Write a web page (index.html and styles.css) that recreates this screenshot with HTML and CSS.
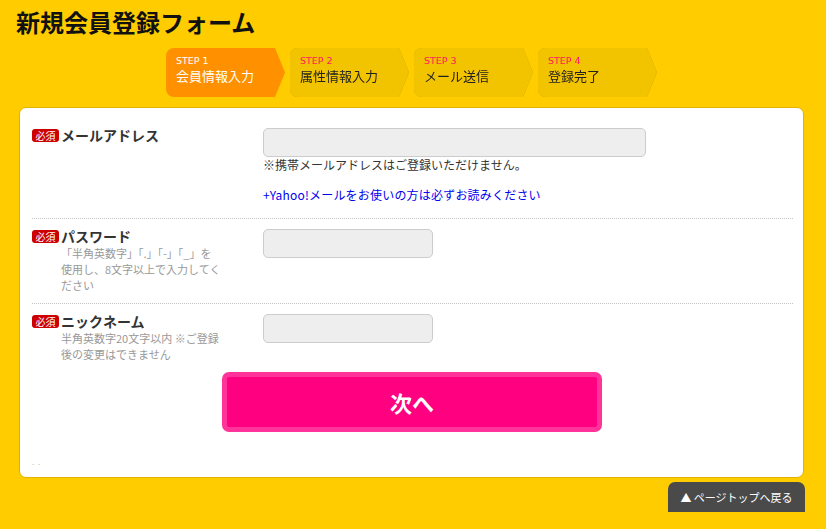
FILE: index.html
```html
<!DOCTYPE html>
<html lang="ja">
<head>
<meta charset="utf-8">
<title>新規会員登録フォーム</title>
<link rel="stylesheet" href="styles.css">
</head>
<body>
<h1 class="title">新規会員登録フォーム</h1>
<ol class="steps">
  <li class="step-wrap"><div class="step active"><span class="step-no">STEP 1</span><span class="step-name">会員情報入力</span></div></li>
  <li class="step-wrap"><div class="step"><span class="step-no">STEP 2</span><span class="step-name">属性情報入力</span></div></li>
  <li class="step-wrap"><div class="step"><span class="step-no">STEP 3</span><span class="step-name">メール送信</span></div></li>
  <li class="step-wrap"><div class="step"><span class="step-no">STEP 4</span><span class="step-name">登録完了</span></div></li>
</ol>
<main class="card">
  <div class="row row-mail">
    <div class="label-col">
      <div class="label"><span class="badge">必須</span>メールアドレス</div>
    </div>
    <div class="field">
      <input class="input wide" type="text">
      <p class="hint">※携帯メールアドレスはご登録いただけません。</p>
      <a class="link" href="#">+Yahoo!メールをお使いの方は必ずお読みください</a>
    </div>
  </div>
  <div class="row">
    <div class="label-col">
      <div class="label"><span class="badge">必須</span>パスワード</div>
      <p class="note">「半角英数字」「.」「-」「_」を<br>使用し、8文字以上で入力してく<br>ださい</p>
    </div>
    <div class="field">
      <input class="input short" type="password">
    </div>
  </div>
  <div class="row last">
    <div class="label-col">
      <div class="label"><span class="badge">必須</span>ニックネーム</div>
      <p class="note">半角英数字20文字以内 ※ご登録<br>後の変更はできません</p>
    </div>
    <div class="field">
      <input class="input short" type="text">
    </div>
  </div>
  <div class="actions"><button class="next" type="button">次へ</button></div>
  <div class="dots">. .</div>
</main>
<div class="pagetop-bar"><a class="pagetop" href="#">▲&nbsp;ページトップへ戻る</a></div>
</body>
</html>
```
FILE: styles.css
```css
* { box-sizing: border-box; }
html, body { margin: 0; padding: 0; }
body {
  background: #ffcc00;
  font-family: "Noto Sans CJK JP", "Noto Sans", sans-serif;
  color: #333;
  width: 826px;
  height: 529px;
  overflow: hidden;
}
.title {
  margin: 0;
  padding: 7px 0 0 16px;
  font-size: 24px;
  line-height: 30px;
  font-weight: bold;
  color: #111;
}
.steps {
  list-style: none;
  margin: 11px 0 0 0;
  padding: 0 0 0 166px;
  display: flex;
  gap: 5px;
}
.step-wrap {
  filter: drop-shadow(0 0 0.7px rgba(170, 120, 0, 0.7));
}
.step-wrap:first-child { filter: none; }
.step {
  width: 119px;
  height: 49px;
  padding: 7px 0 0 10px;
  background: #f2c400;
  border-radius: 8px;
  clip-path: polygon(0 0, 109px 0, 100% 50%, 109px 100%, 0 100%);
  display: flex;
  flex-direction: column;
}
.step.active { background: #ff9000; }
.step-no {
  font-family: "DejaVu Sans", sans-serif;
  font-size: 9.5px;
  line-height: 12px;
  color: #ff1a66;
}
.step-name {
  font-size: 13px;
  line-height: 18px;
  color: #222;
}
.step.active .step-no,
.step.active .step-name { color: #fff; }

.card {
  margin: 10px 22px 0 19px;
  background: #fff;
  border: 1px solid #e2b200;
  border-radius: 7px;
  padding: 10px 10px 0 12px;
}
.row {
  display: grid;
  grid-template-columns: 231px 1fr;
  padding: 10px 0;
  border-bottom: 1px dotted #c4c4c4;
}
.row.last { border-bottom: none; }
.label {
  display: flex;
  align-items: center;
  gap: 2px;
  font-size: 14px;
  line-height: 14px;
  height: 14px;
  font-weight: bold;
  color: #333;
}
.badge {
  display: inline-block;
  width: 27px;
  height: 13px;
  background: #cc0000;
  color: #fff;
  border-radius: 3px;
  font-size: 10px;
  line-height: 13px;
  font-weight: normal;
  text-align: center;
}
.note {
  margin: 0;
  padding: 2px 0 0 29px;
  font-size: 11px;
  line-height: 16px;
  color: #999;
}
.field { display: flex; flex-direction: column; align-items: flex-start; }
.input {
  height: 29px;
  background: #eeeeee;
  border: 1px solid #cccccc;
  border-radius: 5px;
  margin: 0;
}
.input.wide { width: 383px; }
.input.short { width: 170px; }
.hint {
  margin: 0;
  font-size: 12px;
  line-height: 16px;
  color: #333;
}
.link {
  display: block;
  margin: 14px 0 5px;
  font-size: 12px;
  line-height: 16px;
  color: #0000ee;
  text-decoration: none;
  letter-spacing: 0.2px;
}
.actions { display: flex; justify-content: center; padding-right: 1px; }
.next {
  width: 380px;
  height: 60px;
  background: #ff0080;
  border: 5px solid #ff3399;
  border-radius: 7px;
  color: #fff;
  font-family: "Noto Sans CJK JP", sans-serif;
  font-size: 22px;
  font-weight: bold;
  padding: 0;
}
.dots {
  margin-top: 25px;
  padding-bottom: 10px;
  height: 20px;
  font-size: 8px;
  line-height: 10px;
  color: #bbb;
  letter-spacing: 1px;
}
.pagetop-bar {
  display: flex;
  justify-content: flex-end;
  padding-right: 21px;
  margin-top: 4px;
}
.pagetop {
  display: block;
  width: 137px;
  height: 30px;
  background: #4a4a4a;
  border-radius: 7px 7px 0 0;
  color: #fff;
  font-size: 11px;
  line-height: 30px;
  text-align: center;
  text-decoration: none;
}
```
